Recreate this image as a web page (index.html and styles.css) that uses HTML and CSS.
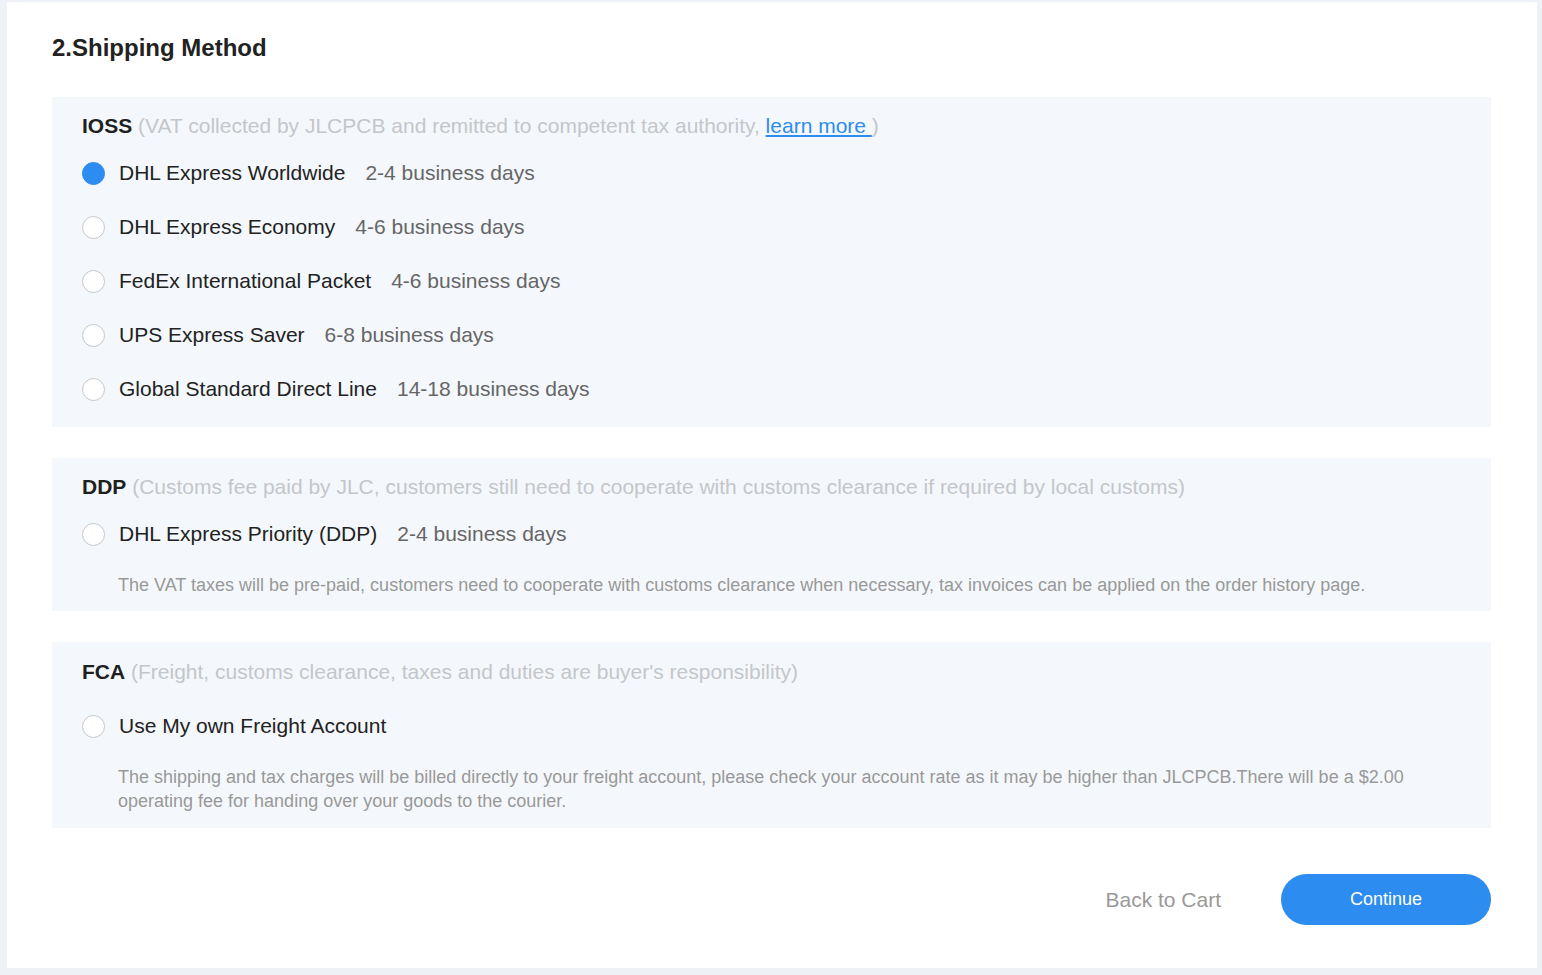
FILE: index.html
```html
<!DOCTYPE html>
<html lang="en">
<head>
<meta charset="utf-8">
<title>Shipping Method</title>
<link rel="stylesheet" href="styles.css">
</head>
<body>
<div class="card">
  <h2 class="title">2.Shipping Method</h2>

  <section class="group group-ioss">
    <div class="group-head"><b>IOSS</b> <span class="hint">(VAT collected by JLCPCB and remitted to competent tax authority, <a class="link" href="#">learn more </a>)</span></div>
    <div class="option"><span class="radio checked"></span><span class="name">DHL Express Worldwide</span><span class="days">2-4 business days</span></div>
    <div class="option"><span class="radio"></span><span class="name">DHL Express Economy</span><span class="days">4-6 business days</span></div>
    <div class="option"><span class="radio"></span><span class="name">FedEx International Packet</span><span class="days">4-6 business days</span></div>
    <div class="option"><span class="radio"></span><span class="name">UPS Express Saver</span><span class="days">6-8 business days</span></div>
    <div class="option"><span class="radio"></span><span class="name">Global Standard Direct Line</span><span class="days">14-18 business days</span></div>
  </section>

  <section class="group group-ddp">
    <div class="group-head"><b>DDP</b> <span class="hint">(Customs fee paid by JLC, customers still need to cooperate with customs clearance if required by local customs)</span></div>
    <div class="option"><span class="radio"></span><span class="name">DHL Express Priority (DDP)</span><span class="days">2-4 business days</span></div>
    <p class="note">The VAT taxes will be pre-paid, customers need to cooperate with customs clearance when necessary, tax invoices can be applied on the order history page.</p>
  </section>

  <section class="group group-fca">
    <div class="group-head"><b>FCA</b> <span class="hint">(Freight, customs clearance, taxes and duties are buyer's responsibility)</span></div>
    <div class="option"><span class="radio"></span><span class="name">Use My own Freight Account</span></div>
    <p class="note">The shipping and tax charges will be billed directly to your freight account, please check your account rate as it may be higher than JLCPCB.There will be a $2.00 operating fee for handing over your goods to the courier.</p>
  </section>

  <div class="actions">
    <a class="back" href="#">Back to Cart</a>
    <button class="continue" type="button">Continue</button>
  </div>
</div>
</body>
</html>
```

FILE: styles.css
```css
* { box-sizing: border-box; }

html, body {
  margin: 0;
  background: #eef1f6;
}

body {
  padding: 2px 5px 0 7px;
  font-family: "Liberation Sans", Arial, Helvetica, sans-serif;
  color: #222;
}

.card {
  background: #fff;
  height: 966px;
  padding: 30px 46px 0 45px;
}

.title {
  margin: 0;
  font-size: 24px;
  line-height: 32px;
  font-weight: bold;
  color: #222;
}

.group {
  background: #f4f8fc;
  padding: 15px 30px 14px;
  margin-top: 31px;
}

.group-ioss {
  margin-top: 33px;
  padding-bottom: 11px;
}

.group-fca {
  padding-top: 16px;
  padding-bottom: 15px;
}

.group-head {
  font-size: 21px;
  line-height: 28px;
  margin-bottom: 6px;
  white-space: nowrap;
}

.group-fca .group-head {
  margin-bottom: 13px;
}

.group-head b {
  color: #1f1f1f;
}

.hint {
  color: #c4c6cb;
}

.link {
  color: #2d8cf0;
  text-decoration: underline;
}

.option {
  display: flex;
  align-items: center;
  height: 54px;
  font-size: 21px;
}

.radio {
  width: 23px;
  height: 23px;
  border-radius: 50%;
  border: 1px solid #c5c7cb;
  background: #fff;
  margin-right: 14px;
  flex: none;
}

.radio.checked {
  background: #2d8cf0;
  border-color: #2d8cf0;
}

.name {
  color: #222;
}

.days {
  margin-left: 20px;
  color: #666;
}

.note {
  margin: 12px 0 0 36px;
  font-size: 18px;
  line-height: 24px;
  color: #999;
}

.actions {
  display: flex;
  justify-content: flex-end;
  align-items: center;
  gap: 60px;
  margin-top: 46px;
}

.back {
  font-size: 21px;
  color: #999;
  text-decoration: none;
}

.continue {
  width: 210px;
  height: 51px;
  border: none;
  border-radius: 26px;
  background: #2d8cf0;
  color: #fff;
  font-family: inherit;
  font-size: 18px;
  padding: 0;
}
```
